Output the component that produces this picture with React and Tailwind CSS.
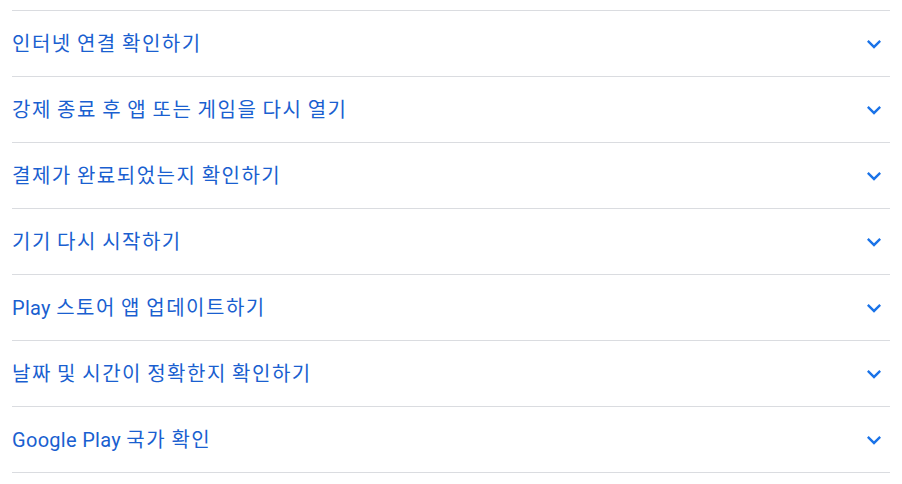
import React from "react";

const items = [
  "인터넷 연결 확인하기",
  "강제 종료 후 앱 또는 게임을 다시 열기",
  "결제가 완료되었는지 확인하기",
  "기기 다시 시작하기",
  "Play 스토어 앱 업데이트하기",
  "날짜 및 시간이 정확한지 확인하기",
  "Google Play 국가 확인",
];

function Label({ text }) {
  const parts = text.split(/([\uAC00-\uD7A3]+)/).filter(Boolean);
  return (
    <span className="text-[20px] leading-[28px] text-[#1a5fd0]">
      {parts.map((p, i) =>
        /[\uAC00-\uD7A3]/.test(p) ? (
          <span key={i} className="tracking-[1.5px]">{p}</span>
        ) : (
          <span key={i} className="tracking-[0.3px]">{p}</span>
        )
      )}
    </span>
  );
}

export default function App() {
  return (
    <div className="w-[902px] h-[484px] bg-white pt-[10px] px-[12px]" style={{ fontFamily: "Roboto, 'Noto Sans CJK KR', sans-serif" }}>
      <div className="w-[878px] border-b border-[#dadce0]">
        {items.map((t) => (
          <div key={t} className="h-[66px] border-t border-[#dadce0] flex items-center justify-between pr-[2px]">
            <Label text={t} />
            <svg width="28" height="28" viewBox="0 0 24 24" fill="#1a73e8">
              <path d="M7.41 8.59 12 13.17l4.59-4.58L18 10l-6 6-6-6 1.41-1.41z" />
            </svg>
          </div>
        ))}
      </div>
    </div>
  );
}
